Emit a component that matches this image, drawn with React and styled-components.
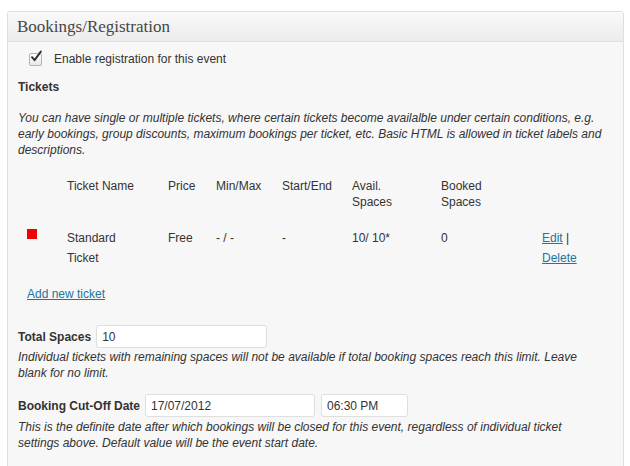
import React from "react";
import styled, { createGlobalStyle } from "styled-components";

const GlobalStyle = createGlobalStyle`
  body {
    margin: 0;
    background: #ffffff;
    font-family: "Liberation Sans", Arial, sans-serif;
    font-size: 12px;
    color: #333333;
  }
`;

function App() {
  return (
    <>
      <GlobalStyle />
      <Panel>
        <PanelHeader>Bookings/Registration</PanelHeader>
        <PanelBody>
          <CheckRow>
            <CheckBox>
              <svg width="14" height="14" viewBox="0 0 14 14">
                <path
                  d="M3 7.2 L5.6 10.2 L11.8 1.6"
                  fill="none"
                  stroke="#333"
                  strokeWidth="2"
                  strokeLinecap="round"
                  strokeLinejoin="round"
                />
              </svg>
            </CheckBox>
            Enable registration for this event
          </CheckRow>

          <SectionTitle>Tickets</SectionTitle>
          <Note $top={15}>
            You can have single or multiple tickets, where certain tickets
            become availalble under certain conditions, e.g. early bookings,
            group discounts, maximum bookings per ticket, etc. Basic HTML is
            allowed in ticket labels and descriptions.
          </Note>

          <TicketGrid>
            <HeadCell />
            <HeadCell>Ticket Name</HeadCell>
            <HeadCell>Price</HeadCell>
            <HeadCell>Min/Max</HeadCell>
            <HeadCell>Start/End</HeadCell>
            <HeadCell>
              Avail.
              <br />
              Spaces
            </HeadCell>
            <HeadCell>
              Booked
              <br />
              Spaces
            </HeadCell>
            <HeadCell />

            <Cell>
              <Marker />
            </Cell>
            <Cell>
              Standard
              <br />
              Ticket
            </Cell>
            <Cell>Free</Cell>
            <Cell>- / -</Cell>
            <Cell>-</Cell>
            <Cell>10/ 10*</Cell>
            <Cell>0</Cell>
            <Cell>
              <Link>Edit</Link> |
              <br />
              <Link>Delete</Link>
            </Cell>
          </TicketGrid>

          <AddLink>Add new ticket</AddLink>

          <FieldRow $top={23}>
            <FieldLabel>Total Spaces</FieldLabel>
            <TextInput $width={171} defaultValue="10" />
          </FieldRow>
          <Note $top={1} $width={585}>
            Individual tickets with remaining spaces will not be available if
            total booking spaces reach this limit. Leave blank for no limit.
          </Note>

          <FieldRow $top={13}>
            <FieldLabel>Booking Cut-Off Date</FieldLabel>
            <TextInput $width={170} defaultValue="17/07/2012" />
            <TextInput $width={87} defaultValue="06:30 PM" />
          </FieldRow>
          <Note $top={2} $width={585}>
            This is the definite date after which bookings will be closed for
            this event, regardless of individual ticket settings above. Default
            value will be the event start date.
          </Note>
        </PanelBody>
      </Panel>
    </>
  );
}

export default App;

const Panel = styled.div`
  margin: 11px 0 0 7px;
  width: 617px;
  height: 470px;
  box-sizing: border-box;
  border: 1px solid #dfdfdf;
  border-radius: 3px;
  background: #f7f7f7;
  overflow: hidden;
`;

const PanelHeader = styled.div`
  height: 29px;
  border-bottom: 1px solid #dfdfdf;
  background: linear-gradient(to bottom, #f9f9f9, #ececec);
  padding-left: 9px;
  font-family: Georgia, "Liberation Serif", "Times New Roman", serif;
  font-size: 17px;
  line-height: 29px;
  color: #464646;
`;

const PanelBody = styled.div`
  padding: 9px 10px 0 10px;
  line-height: 16px;
`;

const CheckRow = styled.div`
  display: flex;
  align-items: center;
  gap: 12px;
  padding-left: 11px;
  height: 16px;
`;

const CheckBox = styled.span`
  position: relative;
  width: 11px;
  height: 11px;
  border: 1px solid #b4b4b4;
  border-radius: 2px;
  background: linear-gradient(to bottom, #ffffff, #e8e8e8);
  svg {
    position: absolute;
    left: -1px;
    top: -4px;
  }
`;

const SectionTitle = styled.div`
  margin-top: 12px;
  font-weight: bold;
`;

const Note = styled.p`
  margin: ${(p) => p.$top}px 0 0 0;
  max-width: ${(p) => (p.$width ? `${p.$width}px` : "none")};
  font-style: italic;
  line-height: 16px;
`;

const TicketGrid = styled.div`
  display: grid;
  grid-template-columns: 40px 101px 48px 66px 70px 89px 101px 1fr;
  margin: 20px 0 0 9px;
  row-gap: 18px;
`;

const HeadCell = styled.div`
  line-height: 16px;
`;

const Cell = styled.div`
  line-height: 20px;
`;

const Marker = styled.span`
  display: block;
  width: 10px;
  height: 10px;
  margin-top: 1px;
  background: #f00000;
`;

const Link = styled.a`
  color: #21759b;
  text-decoration: underline;
  cursor: pointer;
`;

const AddLink = styled(Link)`
  display: block;
  width: max-content;
  margin: 18px 0 0 9px;
`;

const FieldRow = styled.div`
  display: flex;
  align-items: center;
  gap: 6px;
  margin-top: ${(p) => p.$top}px;
  height: 23px;
`;

const FieldLabel = styled.span`
  font-weight: bold;
  margin-right: -1px;
`;

const TextInput = styled.input`
  box-sizing: border-box;
  width: ${(p) => p.$width}px;
  height: 23px;
  padding: 0 5px;
  border: 1px solid #dfdfdf;
  border-radius: 3px;
  background: #ffffff;
  font-family: "Liberation Sans", Arial, sans-serif;
  font-size: 12px;
  color: #333333;
  outline: none;
`;
